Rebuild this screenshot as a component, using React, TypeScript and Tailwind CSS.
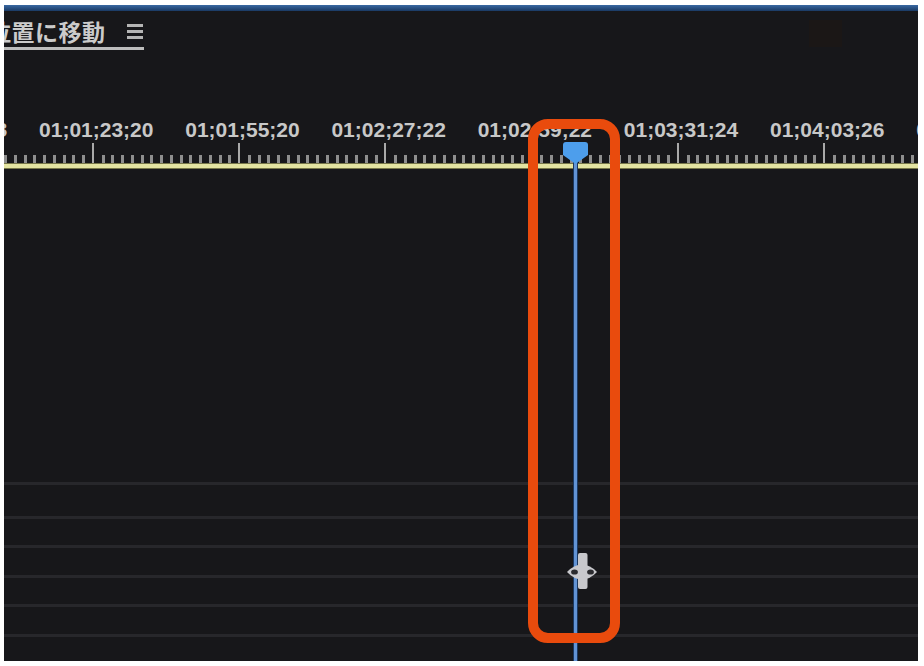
import React from 'react';

const LABELS = [
  '01;00;51;18',
  '01;01;23;20',
  '01;01;55;20',
  '01;02;27;22',
  '01;02;59;22',
  '01;03;31;24',
  '01;04;03;26',
  '01;04;35;28',
];

const TICK_COUNT = 94;
const TRACK_ROWS = [34, 29, 30, 29, 30];

const PlayheadCursor = () => (
  <svg width="32" height="38" viewBox="0 0 32 38">
    <rect x="12" y="1" width="9.5" height="36" rx="2" fill="#c8c8cc" />
    <path d="M1 20 Q8 12.5 16 12.5 Q24 12.5 31 20 Q24 27.5 16 27.5 Q8 27.5 1 20Z" fill="#c8c8cc" />
    <ellipse cx="8.5" cy="20" rx="3.4" ry="2.6" fill="#2a2a2e" />
    <ellipse cx="24.5" cy="20" rx="3.4" ry="2.6" fill="#2a2a2e" />
  </svg>
);

export default function App() {
  return (
    <div className="w-[924px] h-[666px] bg-white pl-[4px] pr-[6px] pt-[5px] pb-[5px]">
      <div className="relative h-full flex flex-col overflow-hidden bg-[#17171a]">
        {/* panel top bar */}
        <div className="h-[6px] shrink-0 bg-gradient-to-b from-[#3a69a3] to-[#1a3a64]" />

        {/* tab header */}
        <div className="h-[36px] shrink-0 flex items-start">
          <span
            className="ml-[-16px] mt-[9px] text-[23px] leading-none font-bold tracking-[0.5px] text-[#cbcbcb] whitespace-nowrap"
            style={{ fontFamily: '"Noto Sans CJK JP", "Noto Sans", sans-serif' }}
          >
            位置に移動
          </span>
          <div className="ml-[21px] mt-[13px] flex flex-col gap-[3px]">
            <div className="h-[3px] w-[16px] bg-[#b5b5b5]" />
            <div className="h-[3px] w-[16px] bg-[#b5b5b5]" />
            <div className="h-[3px] w-[16px] bg-[#b5b5b5]" />
          </div>
          <div className="ml-[666px] mt-[9px] w-[33px] h-[27px] bg-[#1b1716]" />
        </div>
        <div className="h-[3px] w-[140px] shrink-0 bg-[#bdbdbd]" />

        <div className="h-[67px] shrink-0" />

        {/* time ruler labels */}
        <div
          className="h-[26px] shrink-0 flex ml-[-127px] text-[21px] leading-[26px] font-bold text-[#c8c8c8] whitespace-nowrap"
          style={{ fontFamily: '"Liberation Sans", Arial, sans-serif' }}
        >
          {LABELS.map((label) => (
            <div key={label} className="w-[146.2px] shrink-0 text-center">
              {label}
            </div>
          ))}
        </div>

        {/* ticks */}
        <div className="h-[20px] shrink-0 flex items-end">
          {Array.from({ length: TICK_COUNT }).map((_, i) => (
            <div key={i} className="w-[9.75px] shrink-0 flex items-end">
              {(i - 9) % 15 === 0 ? (
                <div className="w-[2px] h-[20px] bg-[#a9a9a9]" />
              ) : (
                <div className="w-[3px] h-[8px] bg-[#8e8e8e]" />
              )}
            </div>
          ))}
        </div>

        {/* work area bar */}
        <div className="h-[6px] shrink-0 bg-[#e4e4a2] border-y-[1.5px] border-[#77774a]" />

        {/* tracks */}
        <div className="flex-1 flex flex-col">
          <div className="h-[313px] shrink-0" />
          {TRACK_ROWS.map((h, i) => (
            <div
              key={i}
              className="shrink-0 border-t-[3px] border-[#27272b]"
              style={{ height: h }}
            />
          ))}
          <div className="flex-1 border-t-[3px] border-[#27272b]" />
        </div>

        {/* playhead line */}
        <div className="absolute left-[569px] top-[156px] bottom-0 w-[5px] bg-[#1b3860] flex justify-center">
          <div className="w-[3px] h-full bg-[#6293d4]" />
        </div>

        {/* playhead head */}
        <svg className="absolute left-[559px] top-[137px]" width="25" height="22" viewBox="0 0 25 22">
          <path d="M3 0 H22 Q25 0 25 3 V13 L12.5 22 L0 13 V3 Q0 0 3 0Z" fill="#4d9eec" />
        </svg>

        {/* mouse cursor */}
        <div className="absolute left-[562px] top-[547px]">
          <PlayheadCursor />
        </div>

        {/* highlight frame */}
        <div className="absolute left-[524px] top-[114px] w-[92px] h-[524px] rounded-[20px] border-[10px] border-[#e94b0d]" />
      </div>
    </div>
  );
}
